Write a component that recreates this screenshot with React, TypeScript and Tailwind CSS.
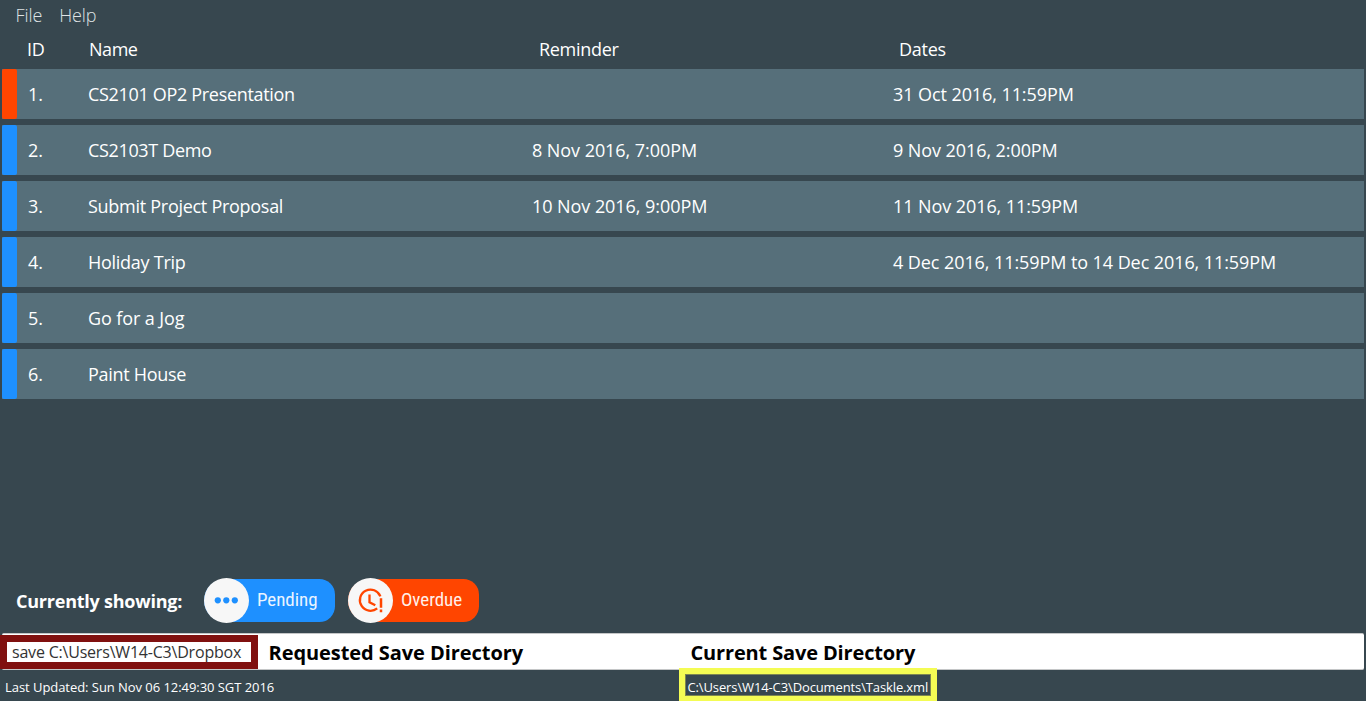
interface Task {
  id: number;
  name: string;
  nameTracking: string;
  reminder?: string;
  dates?: string;
  overdue?: boolean;
}

const tasks: Task[] = [
  { id: 1, name: "CS2101 OP2 Presentation", nameTracking: "tracking-[-0.32px]", dates: "31 Oct 2016, 11:59PM", overdue: true },
  { id: 2, name: "CS2103T Demo", nameTracking: "tracking-[-0.35px]", reminder: "8 Nov 2016, 7:00PM", dates: "9 Nov 2016, 2:00PM" },
  { id: 3, name: "Submit Project Proposal", nameTracking: "tracking-[-0.28px]", reminder: "10 Nov 2016, 9:00PM", dates: "11 Nov 2016, 11:59PM" },
  { id: 4, name: "Holiday Trip", nameTracking: "tracking-[-0.27px]", dates: "4 Dec 2016, 11:59PM to 14 Dec 2016, 11:59PM" },
  { id: 5, name: "Go for a Jog", nameTracking: "tracking-[-0.1px]" },
  { id: 6, name: "Paint House", nameTracking: "tracking-[-0.3px]" },
];

function MenuBar() {
  return (
    <nav className="flex h-[31px] items-center gap-[17px] pl-[15.5px] text-[18px] font-light text-[#dfe3e5]">
      <span className="tracking-[-0.1px]">File</span>
      <span className="tracking-[-0.1px]">Help</span>
    </nav>
  );
}

function TableHeader() {
  return (
    <div className="grid h-[38px] grid-cols-[62px_450px_360px_1fr] items-center pb-[2px] pl-[27px] text-[18px] text-white">
      <span className="tracking-[-0.3px]">ID</span>
      <span className="tracking-[-0.45px]">Name</span>
      <span className="tracking-[-0.3px]">Reminder</span>
      <span className="tracking-[-0.25px]">Dates</span>
    </div>
  );
}

function TaskRow({ task }: { task: Task }) {
  return (
    <div className="flex h-[50px] bg-[#566f7a]">
      <div className={task.overdue ? "w-[15px] rounded-[2px] bg-[#ff4500]" : "w-[15px] rounded-[2px] bg-[#1e90ff]"} />
      <div className="grid flex-1 grid-cols-[60px_444px_361px_1fr] items-center whitespace-nowrap pl-[11px] text-[18px] text-white">
        <span>{task.id}.</span>
        <span className={task.nameTracking}>{task.name}</span>
        <span className="tracking-[-0.06px]">{task.reminder}</span>
        <span className="tracking-[-0.08px]">{task.dates}</span>
      </div>
    </div>
  );
}

function PendingIcon() {
  return (
    <svg viewBox="0 0 45 45" className="size-[45px]">
      <circle cx="22.5" cy="22.5" r="22.5" fill="#f7f7f7" />
      <circle cx="13.8" cy="22.3" r="3.1" fill="#1e90ff" />
      <circle cx="22.3" cy="22.3" r="3.1" fill="#1e90ff" />
      <circle cx="30.8" cy="22.3" r="3.1" fill="#1e90ff" />
    </svg>
  );
}

function OverdueIcon() {
  return (
    <svg viewBox="0 0 45 45" className="size-[45px]">
      <circle cx="22.5" cy="22.5" r="22.5" fill="#f7f7f7" />
      <g fill="none" stroke="#ff4500" strokeWidth="2.3">
        <path d="M32.4 18.4A10.6 10.6 0 1 0 29.2 30.4" />
        <path d="M21.5 16.5V24.3L27.3 27.3" />
        <path d="M33 20.3V29.7M33 31.6V34.2" strokeWidth="2.5" />
      </g>
    </svg>
  );
}

function FilterBar() {
  return (
    <div className="flex h-[45px] items-center pl-[16px]">
      <span className="w-[188px] pt-px text-[18px] font-bold tracking-[-0.23px] text-white">Currently showing:</span>
      <div className="flex h-[43px] w-[131px] items-center rounded-[22px] rounded-r-[16px] bg-[#1e90ff]">
        <PendingIcon />
        <span className="pb-px pl-[8px] font-['Roboto_Condensed',sans-serif] text-[19px] tracking-[-0.05px] text-[#eaf4ff]">Pending</span>
      </div>
      <div className="ml-[13px] flex h-[43px] w-[131px] items-center rounded-[22px] rounded-r-[16px] bg-[#ff4500]">
        <OverdueIcon />
        <span className="pb-px pl-[8px] font-['Roboto_Condensed',sans-serif] text-[19px] tracking-[-0.05px] text-[#fff0ea]">Overdue</span>
      </div>
    </div>
  );
}

function CommandBar() {
  return (
    <div className="relative mx-[2px] mt-[10px] flex h-[37px] items-center rounded-[2px] border-y border-[#c4c6c7] bg-white whitespace-nowrap">
      <span className="w-[257px] pl-[10px] text-[16px] tracking-[-0.2px] text-[#333]">save C:\Users\W14-C3\Dropbox</span>
      <span className="w-[422px] pt-[2px] pl-[9.5px] text-[20px] font-bold tracking-[-0.06px] text-black">Requested Save Directory</span>
      <span className="pt-[2px] pl-[9.5px] text-[20px] font-bold tracking-[-0.15px] text-black">Current Save Directory</span>
      <div className="absolute -left-[2px] top-px h-[34px] w-[258px] border-7 border-[#80100f]" />
    </div>
  );
}

function StatusBar() {
  return (
    <footer className="relative flex h-[31px] items-center whitespace-nowrap pt-[4px] pl-[5px] text-[13px] text-white">
      <span className="w-[682.5px] tracking-[-0.05px]">Last Updated: Sun Nov 06 12:49:30 SGT 2016</span>
      <span className="tracking-[-0.12px]">C:\Users\W14-C3\Documents\Taskle.xml</span>
      <div className="absolute left-[679px] -top-[2px] h-[33px] w-[258px] border-x-6 border-t-6 border-b-5 border-[#f4fc54]">
        <div className="h-full border border-[#7d8651]" />
      </div>
    </footer>
  );
}

export default function App() {
  return (
    <div className="flex h-[701px] w-[1366px] flex-col overflow-hidden bg-[#37474f] font-['Open_Sans',sans-serif]">
      <MenuBar />
      <TableHeader />
      <main className="flex flex-1 flex-col gap-[6px] px-[2px]">
        {tasks.map((task) => (
          <TaskRow key={task.id} task={task} />
        ))}
      </main>
      <FilterBar />
      <CommandBar />
      <StatusBar />
    </div>
  );
}
